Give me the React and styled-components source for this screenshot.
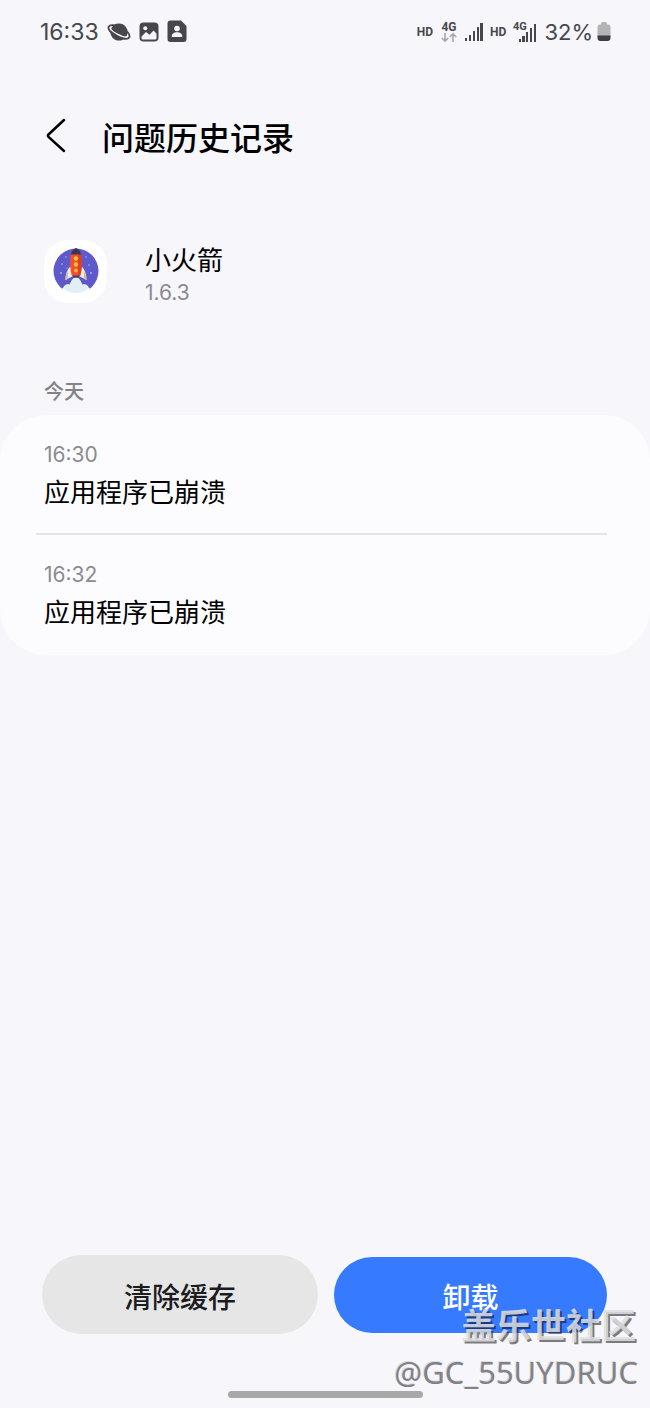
import React from "react";
import styled, { createGlobalStyle } from "styled-components";

const GlobalStyle = createGlobalStyle`
  * { box-sizing: border-box; }
  body {
    margin: 0;
    background: #f6f6fb;
    color: #000;
    font-family: Inter, "Noto Sans CJK SC", sans-serif;
  }
  h1, h2, p, ul { margin: 0; padding: 0; }
`;

const Screen = styled.div`
  position: relative;
  min-height: 100vh;
  display: flex;
  flex-direction: column;
`;

const StatusBar = styled.header`
  display: flex;
  justify-content: space-between;
  align-items: center;
  height: 63px;
  padding: 0 39px 0 40px;
  color: #47474b;
`;

const StatusGroup = styled.div`
  display: flex;
  align-items: center;
  gap: ${(p) => p.$gap}px;
`;

const StatusText = styled.span`
  font-size: ${(p) => p.$size}px;
  line-height: 32px;
`;

const HdLabel = styled.span`
  font: 700 12px/16px Roboto, sans-serif;
`;

const TitleBar = styled.div`
  display: flex;
  align-items: center;
  gap: 34px;
  height: 48px;
  margin-top: 49px;
  padding: 0 44px;
`;

const BackButton = styled.button`
  display: flex;
  padding: 0;
  border: 0;
  background: none;
  color: #000;
`;

const Title = styled.h1`
  font: 500 32px/48px "Noto Sans CJK SC", sans-serif;
`;

const AppInfo = styled.section`
  display: flex;
  align-items: center;
  gap: 38px;
  margin-top: 75px;
  padding: 0 44px;
`;

const AppIcon = styled.div`
  display: flex;
  align-items: center;
  justify-content: center;
  width: 63px;
  height: 63px;
  border-radius: 24px;
  background: #fff;
`;

const AppText = styled.div`
  padding-top: 8px;
`;

const AppName = styled.h2`
  font-size: 26px;
  line-height: 36px;
  font-weight: 400;
`;

const Muted = styled.p`
  font-size: 21px;
  line-height: 28px;
  color: #8b8b90;
`;

const DayLabel = styled.h2`
  margin-top: 70px;
  padding: 0 44px;
  font: 500 20px/28px "Noto Sans CJK SC", sans-serif;
  color: #828287;
`;

const Card = styled.ul`
  margin-top: 10px;
  padding: 0 43px 0 36px;
  border-radius: 46px;
  background: #fcfcff;
  list-style: none;
`;

const Entry = styled.li`
  height: 120px;
  padding: 26px 8px 0;

  & + & {
    border-top: 2px solid #e3e3e8;
    margin-top: -2px;
    height: 122px;
  }
`;

const EntryText = styled.p`
  margin-top: 6px;
  font-size: 26px;
  line-height: 36px;
`;

const Actions = styled.footer`
  display: flex;
  align-items: center;
  gap: 16px;
  margin-top: auto;
  padding: 0 43px 0 42px;
`;

const ActionButton = styled.button`
  flex: ${(p) => (p.$primary ? 273 : 276)} 1 0;
  height: ${(p) => (p.$primary ? 76 : 79)}px;
  padding: 2px 0 0;
  border: 0;
  border-radius: 40px;
  background: ${(p) => (p.$primary ? "#367aff" : "#e6e6e6")};
  color: ${(p) => (p.$primary ? "#fff" : "#1c1c1e")};
  font: 500 28px/40px "Noto Sans CJK SC", sans-serif;
`;

const NavHandle = styled.div`
  align-self: center;
  width: 30%;
  height: 7px;
  margin: 57px 0 10px;
  border-radius: 4px;
  background: #a8a8a9;
`;

const Watermark = styled.div`
  position: absolute;
  right: 12px;
  bottom: 12px;
  text-align: right;
  pointer-events: none;
`;

const Community = styled.p`
  padding-right: 2px;
  font: 700 35px/48px "Noto Sans CJK SC", sans-serif;
  color: rgba(224, 224, 226, 0.85);
  text-shadow: 2px 2px 0 rgba(0, 0, 0, 0.5);
`;

const UserTag = styled.p`
  font: 400 31px/48px "Noto Sans", sans-serif;
  color: #828286;
  text-shadow: -1px -1px 0 #dcdce0;
`;

const PlanetIcon = () => (
  <svg width="24" height="20" viewBox="0 0 24 20">
    <g transform="rotate(27 12 10)">
      <ellipse cx="12" cy="10" rx="11.600" ry="4.800" fill="none" stroke="#47474b" strokeWidth="1.800" />
      <circle cx="12" cy="10" r="8.600" fill="#47474b" />
      <path d="M2.500 10.300C4.500 13.500 19.500 13.500 21.500 10.300" fill="none" stroke="#f6f6fb" strokeWidth="1.300" />
    </g>
  </svg>
);

const PhotoIcon = () => (
  <svg width="20" height="20" viewBox="0 0 20 20">
    <rect x="1.500" y="1.500" width="17" height="17" rx="3" fill="#47474b" stroke="#47474b" strokeWidth="2" />
    <circle cx="6.300" cy="6.300" r="2" fill="#f6f6fb" />
    <path d="M2.500 14.500 7 10l3.500 2.800L14.500 8.500l3 3V16a1.500 1.500 0 0 1-1.500 1.500H4A1.500 1.500 0 0 1 2.500 16z" fill="#f6f6fb" />
  </svg>
);

const ContactIcon = () => (
  <svg width="20" height="23" viewBox="0 0 20 23">
    <path d="M3.500.5h10.500L19.500 6v13a3 3 0 0 1-3 3h-13a3 3 0 0 1-3-3V3.500a3 3 0 0 1 3-3z" fill="#47474b" />
    <circle cx="10" cy="8.500" r="2.800" fill="#f6f6fb" />
    <path d="M4.800 17v-1c0-5 10.400-5 10.400 0v1z" fill="#f6f6fb" />
  </svg>
);

const NetworkIcon = () => (
  <svg width="18" height="24" viewBox="0 0 18 24">
    <text x="9" y="11" textAnchor="middle" fontFamily="Roboto, sans-serif" fontWeight="700" fontSize="12" fill="#47474b">4G</text>
    <path d="M5 13v8M1.800 18 5 21.200 8.200 18M13 22v-8M9.800 17 13 13.800 16.200 17" fill="none" stroke="#a5a5aa" strokeWidth="1.600" />
  </svg>
);

const SignalIcon = () => (
  <svg width="18" height="18" viewBox="0 0 18 18" fill="#47474b">
    <rect x="0" y="15" width="2" height="3" />
    <rect x="4" y="12" width="2" height="6" />
    <rect x="8" y="8" width="2" height="10" />
    <rect x="12" y="4" width="2" height="14" />
    <rect x="15" y="0" width="3" height="18" />
  </svg>
);

const NetworkSignalIcon = () => (
  <svg width="24" height="22" viewBox="0 0 24 22" fill="#47474b">
    <text x="0" y="9" fontFamily="Roboto, sans-serif" fontWeight="700" fontSize="11">4G</text>
    <rect x="6" y="18" width="2" height="3" />
    <rect x="9" y="15" width="3" height="6" />
    <rect x="13" y="11" width="2" height="10" />
    <rect x="17" y="7" width="2" height="14" />
    <rect x="21" y="3" width="2" height="18" />
  </svg>
);

const BatteryIcon = () => (
  <svg width="14" height="20" viewBox="0 0 14 20">
    <path d="M4 2.500V1.500A1.500 1.500 0 0 1 5.500 0h3A1.500 1.500 0 0 1 10 1.500v1h1a2.500 2.500 0 0 1 2.500 2.500v9H.5V5A2.500 2.500 0 0 1 3 2.500z" fill="#b4b4b7" />
    <path d="M.5 13.500h13V16a3 3 0 0 1-3 3h-7a3 3 0 0 1-3-3z" fill="#3f3f42" />
  </svg>
);

const RocketIcon = () => (
  <svg width="46" height="46" viewBox="0 0 46 46">
    <circle cx="23" cy="23" r="22.500" fill="#5f5acb" />
    <g fill="#b9b7f2">
      <circle cx="9" cy="16" r=".8" />
      <circle cx="13" cy="9" r=".7" />
      <circle cx="33" cy="9" r=".7" />
      <circle cx="36" cy="17" r=".8" />
      <circle cx="8" cy="25" r=".9" />
      <circle cx="38" cy="25" r=".9" />
      <circle cx="14" cy="20" r=".6" />
    </g>
    <path d="M4 46 10 40Q12 35 17 36.500C18 33 20 29.500 23 29.500s5 3.500 6 7Q34 35 36 40L42 46z" fill="#fff" />
    <path d="M11 41Q12 36 17 37C18 33 20 30 23 30s5 3 6 7Q34 36 35 41 30 45 23 45T11 41z" fill="#e3eff7" />
    <path d="M18 18c-4 3.500-5.500 8-5.500 14l7.500-4zM28 18c4 3.500 5.500 8 5.500 14L26 28z" fill="#f1ece4" />
    <path d="M12.500 32c0-4 1-7 2.500-9.500v8zM33.500 32c0-4-1-7-2.500-9.500v8z" fill="#cdbf9f" />
    <path d="M18 6h10c1.500 8 1 16-1 22h-8c-2-6-2.500-14-1-22z" fill="#f2502e" />
    <path d="M25 6h3c1.500 8 1 16-1 22h-2z" fill="#d84127" />
    <path d="M18 6.500c.5-3 1.500-5 5-6.500 3.500 1.500 4.500 3.500 5 6.500z" fill="#40364a" />
    <circle cx="23" cy="10.500" r="2.200" fill="#ffbd38" />
    <circle cx="23" cy="16.500" r="2.200" fill="#ffbd38" />
    <circle cx="23" cy="22.500" r="2" fill="#ffab35" />
    <path d="M20 27.500h6v2h-6z" fill="#46405d" />
  </svg>
);

const entries = [
  { time: "16:30", text: "应用程序已崩溃" },
  { time: "16:32", text: "应用程序已崩溃" },
];

export default function App() {
  return (
    <>
      <GlobalStyle />
      <Screen>
        <StatusBar>
          <StatusGroup $gap={8}>
            <StatusText $size={23}>16:33</StatusText>
            <PlanetIcon />
            <StatusGroup $gap={8}>
              <PhotoIcon />
              <ContactIcon />
            </StatusGroup>
          </StatusGroup>
          <StatusGroup $gap={7}>
            <HdLabel>HD</HdLabel>
            <NetworkIcon />
            <SignalIcon />
            <HdLabel>HD</HdLabel>
            <NetworkSignalIcon />
            <StatusGroup $gap={4}>
              <StatusText $size={22}>32%</StatusText>
              <BatteryIcon />
            </StatusGroup>
          </StatusGroup>
        </StatusBar>
        <TitleBar>
          <BackButton aria-label="返回">
            <svg width="24" height="36" viewBox="0 0 24 36" fill="none" stroke="currentColor" strokeWidth="2.500" strokeLinecap="round" strokeLinejoin="round">
              <path d="M20 2 4.500 16.500q-1.200 1.200 0 2.400L20 33" />
            </svg>
          </BackButton>
          <Title>问题历史记录</Title>
        </TitleBar>
        <AppInfo>
          <AppIcon>
            <RocketIcon />
          </AppIcon>
          <AppText>
            <AppName>小火箭</AppName>
            <Muted>1.6.3</Muted>
          </AppText>
        </AppInfo>
        <DayLabel>今天</DayLabel>
        <Card>
          {entries.map((e) => (
            <Entry key={e.time}>
              <Muted>{e.time}</Muted>
              <EntryText>{e.text}</EntryText>
            </Entry>
          ))}
        </Card>
        <Actions>
          <ActionButton>清除缓存</ActionButton>
          <ActionButton $primary>卸载</ActionButton>
        </Actions>
        <NavHandle />
        <Watermark>
          <Community>盖乐世社区</Community>
          <UserTag>@GC_55UYDRUC</UserTag>
        </Watermark>
      </Screen>
    </>
  );
}
